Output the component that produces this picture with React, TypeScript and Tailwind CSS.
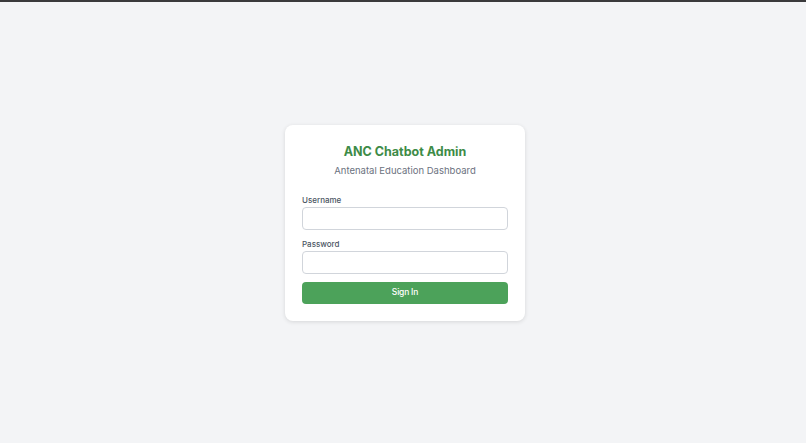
import React from "react";

export default function App() {
  return (
    <div className="min-h-screen bg-[#f3f4f6] flex flex-col" style={{ fontFamily: "Inter, 'Noto Sans', sans-serif" }}>
      <div className="h-[2px] bg-[#3a3a3c]" />
      <div className="flex-1 flex items-center justify-center pl-[4px]">
        <div className="w-[240px] bg-white rounded-[8px] shadow-[0_1px_4px_rgba(0,0,0,0.12)] px-[17px] pt-[18px] pb-[17px]">
          <h1 className="text-center text-[12.5px] font-bold text-[#3d8b47] leading-[18px]">ANC Chatbot Admin</h1>
          <p className="text-center text-[9.5px] text-[#6b7280] mt-[3px] leading-[14px]">Antenatal Education Dashboard</p>
          <div className="mt-[16px]">
            <label className="block text-[8px] font-medium text-[#4b5563] leading-[12px]">Username</label>
            <input className="mt-[1px] block w-full h-[23px] rounded-[4px] border border-[#d1d5db] bg-white outline-none" />
          </div>
          <div className="mt-[8px]">
            <label className="block text-[8px] font-medium text-[#4b5563] leading-[12px]">Password</label>
            <input type="password" className="mt-[1px] block w-full h-[23px] rounded-[4px] border border-[#d1d5db] bg-white outline-none" />
          </div>
          <button className="mt-[8px] w-full h-[22px] rounded-[4px] bg-[#4ca25a] text-white text-[8.5px] font-medium tracking-[-0.2px]">Sign In</button>
        </div>
      </div>
    </div>
  );
}
